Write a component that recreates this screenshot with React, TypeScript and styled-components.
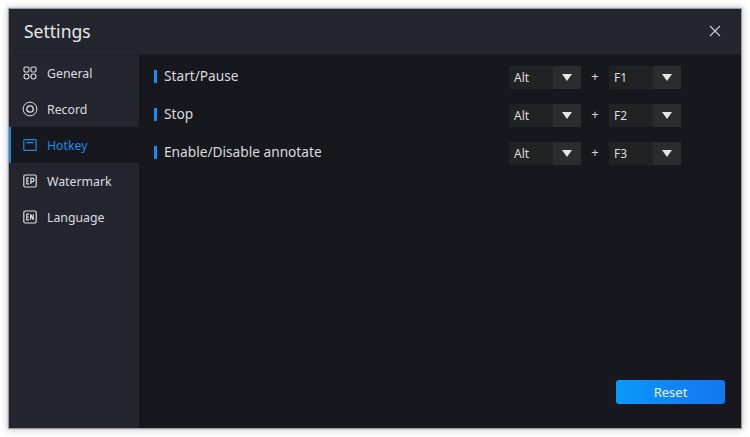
import React from "react";
import styled, { createGlobalStyle } from "styled-components";

const Global = createGlobalStyle`
  html, body { margin: 0; padding: 0; background: #fff; }
  #root { width: 750px; height: 437px; overflow: hidden; }
  * { box-sizing: border-box; }
`;

const Page = styled.div`
  width: 750px;
  height: 437px;
  padding: 9px;
  font-family: "Noto Sans", "Open Sans", sans-serif;
`;

const Win = styled.div`
  width: 732px;
  height: 419px;
  display: flex;
  flex-direction: column;
  background: #23262e;
  box-shadow: 0 0 1px 1px #9a9da1, 0 0 7px 2px rgba(0, 0, 0, 0.2);
`;

const Header = styled.div`
  height: 46px;
  flex: none;
  display: flex;
  align-items: center;
  justify-content: space-between;
  padding: 0 20px 1px 15px;
  border-bottom: 1px solid #1e2026;
`;

const Title = styled.div`
  color: #e6e7e9;
  font-size: 17.5px;
  line-height: 24px;
`;

const Close = styled.svg`
  width: 12px;
  height: 12px;
  display: block;
`;

const Body = styled.div`
  flex: 1;
  display: flex;
  min-height: 0;
`;

const Side = styled.div`
  width: 130px;
  flex: none;
  display: flex;
  flex-direction: column;
`;

const Item = styled.div<{ $active?: boolean }>`
  height: 36px;
  display: flex;
  align-items: center;
  gap: 10px;
  padding-left: 12px;
  font-size: 12.3px;
  color: ${(p) => (p.$active ? "#1a8ae6" : "#dcdde0")};
  background: ${(p) => (p.$active ? "#16181d" : "transparent")};
  border-left: 2px solid ${(p) => (p.$active ? "#1a86e0" : "transparent")};
`;

const Glyph = styled.svg`
  width: 14px;
  height: 14px;
  flex: none;
  display: block;
`;

const Content = styled.div`
  flex: 1;
  background: #16181d;
  display: flex;
  flex-direction: column;
  padding: 3px 16px 24px 15px;
`;

const Rows = styled.div`
  flex: 1;
  display: flex;
  flex-direction: column;
`;

const Row = styled.div`
  height: 38px;
  display: flex;
  align-items: center;
`;

const Mark = styled.span`
  width: 3px;
  height: 13px;
  background: #1b8cf0;
  flex: none;
  margin-right: 7px;
  position: relative;
  top: -1px;
`;

const Label = styled.div`
  flex: 1;
  color: #d9dade;
  font-size: 13.7px;
  line-height: 20px;
  position: relative;
  top: -1px;
`;

const Keys = styled.div`
  width: 172px;
  margin-right: 44px;
  display: flex;
  align-items: center;
`;

const Select = styled.div`
  width: 72px;
  height: 23px;
  display: flex;
  background: #212224;
`;

const SelectText = styled.div`
  flex: 1;
  padding-left: 5px;
  color: #dcdcdc;
  font-size: 12px;
  line-height: 23px;
`;

const Arrow = styled.div`
  width: 28px;
  background: #2b2c2e;
  display: flex;
  align-items: center;
  justify-content: center;
  &::after {
    content: "";
    border-left: 5px solid transparent;
    border-right: 5px solid transparent;
    border-top: 7px solid #e4e4e4;
  }
`;

const Plus = styled.div`
  width: 28px;
  text-align: center;
  color: #d6d8dc;
  font-size: 13px;
  line-height: 20px;
  position: relative;
  top: -1px;
`;

const Footer = styled.div`
  display: flex;
  justify-content: flex-end;
`;

const Reset = styled.button`
  width: 109px;
  height: 24px;
  border: 0;
  padding: 0;
  border-radius: 3px;
  background: linear-gradient(90deg, #0a98fb, #1476f0);
  color: #e9f3ff;
  font-family: inherit;
  font-size: 13px;
  line-height: 24px;
`;

const s = { fill: "none", stroke: "currentColor" } as const;

const General = () => (
  <Glyph viewBox="0 0 14 14" {...s} strokeWidth="1.1">
    <rect x="1" y="1" width="5" height="5" rx="1.2" />
    <rect x="8" y="1" width="5" height="5" rx="1.2" />
    <circle cx="3.5" cy="10.5" r="2.5" />
    <circle cx="10.5" cy="10.5" r="2.5" />
  </Glyph>
);

const RecordIcon = () => (
  <Glyph viewBox="0 0 14 14" {...s} strokeWidth="1" style={{ overflow: "visible" }}>
    <circle cx="7" cy="7" r="6.9" />
    <circle cx="7" cy="7" r="3.2" strokeWidth="1.3" />
  </Glyph>
);

const HotkeyIcon = () => (
  <Glyph viewBox="0 0 14 14" {...s} strokeWidth="1.2">
    <rect x="0.8" y="1.6" width="12.4" height="10.8" rx="1" />
    <path d="M3.5 4.6h7" strokeWidth="1.4" />
  </Glyph>
);

const Badge = ({ text }: { text: string }) => (
  <Glyph viewBox="0 0 14 14" {...s} strokeWidth="1.2">
    <rect x="0.8" y="1" width="12.4" height="12" rx="1.4" />
    {text === "EP" ? (
      <path d="M6 4.2H3.8v5.6H6M3.8 7h2M7.9 10V4.2h1.4a1.5 1.5 0 0 1 0 3.4H7.9" />
    ) : (
      <path d="M6 4.2H3.8v5.6H6M3.8 7h2M7.6 9.8V4.2l2.6 5.6V4.2" />
    )}
  </Glyph>
);

const Key = ({ value }: { value: string }) => (
  <Select>
    <SelectText>{value}</SelectText>
    <Arrow />
  </Select>
);

const rows = [
  { name: "Start/Pause", key: "F1" },
  { name: "Stop", key: "F2" },
  { name: "Enable/Disable annotate", key: "F3" },
];

export default function App() {
  return (
    <Page>
      <Global />
      <Win>
        <Header>
          <Title>Settings</Title>
          <Close viewBox="0 0 12 12" fill="none" stroke="#c9cbcf" strokeWidth="1.1">
            <path d="M1 1l10 10M11 1L1 11" />
          </Close>
        </Header>
        <Body>
          <Side>
            <Item><General />General</Item>
            <Item><RecordIcon />Record</Item>
            <Item $active><HotkeyIcon />Hotkey</Item>
            <Item><Badge text="EP" />Watermark</Item>
            <Item><Badge text="EN" />Language</Item>
          </Side>
          <Content>
            <Rows>
              {rows.map((r) => (
                <Row key={r.name}>
                  <Mark />
                  <Label>{r.name}</Label>
                  <Keys>
                    <Key value="Alt" />
                    <Plus>+</Plus>
                    <Key value={r.key} />
                  </Keys>
                </Row>
              ))}
            </Rows>
            <Footer>
              <Reset>Reset</Reset>
            </Footer>
          </Content>
        </Body>
      </Win>
    </Page>
  );
}
